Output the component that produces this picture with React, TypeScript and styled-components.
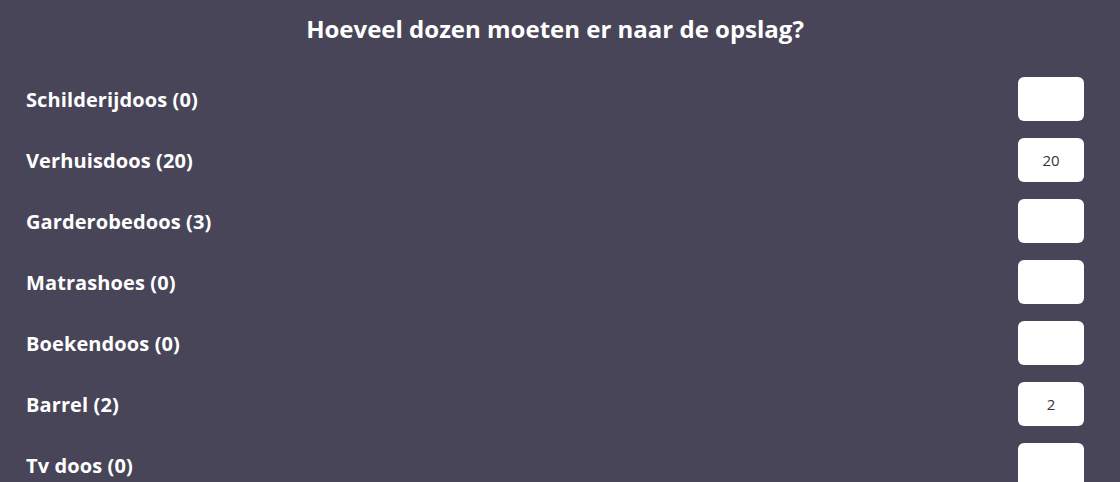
import React from "react";
import styled, { createGlobalStyle } from "styled-components";

const GlobalStyle = createGlobalStyle`
	html, body {
		margin: 0;
		padding: 0;
		background: #484558;
	}
	body {
		font-family: "Open Sans", Lato, sans-serif;
		color: #fff;
	}
`;

type BoxItem = {
	name: string;
	count: number;
	value: string;
};

const boxes: BoxItem[] = [
	{ name: "Schilderijdoos", count: 0, value: "" },
	{ name: "Verhuisdoos", count: 20, value: "20" },
	{ name: "Garderobedoos", count: 3, value: "" },
	{ name: "Matrashoes", count: 0, value: "" },
	{ name: "Boekendoos", count: 0, value: "" },
	{ name: "Barrel", count: 2, value: "2" },
	{ name: "Tv doos", count: 0, value: "" },
];

export default function App() {
	return (
		<>
			<GlobalStyle />
			<Page>
				<Title>Hoeveel dozen moeten er naar de opslag?</Title>
				<List>
					{boxes.map((item) => (
						<Row key={item.name}>
							<Label>
								{item.name} ({item.count})
							</Label>
							<AmountInput type='text' defaultValue={item.value} />
						</Row>
					))}
				</List>
			</Page>
		</>
	);
}

const Page = styled.div`
	height: 482px;
	overflow: hidden;
	padding: 0 36px 0 26px;
	box-sizing: border-box;
`;

const Title = styled.h1`
	margin: 0;
	padding-top: 13px;
	height: 32px;
	line-height: 32px;
	text-align: center;
	font-size: 24px;
	font-weight: 700;
	color: #fff;
`;

const List = styled.div`
	display: flex;
	flex-direction: column;
	gap: 17px;
	margin-top: 32px;
`;

const Row = styled.div`
	display: flex;
	align-items: center;
	justify-content: space-between;
	height: 44px;
`;

const Label = styled.span`
	font-size: 20px;
	font-weight: 700;
	letter-spacing: 0.1px;
	color: #fff;
`;

const AmountInput = styled.input`
	width: 66px;
	height: 44px;
	box-sizing: border-box;
	border: none;
	border-radius: 6px;
	background: #fff;
	text-align: center;
	font-family: "Open Sans", sans-serif;
	font-size: 15px;
	color: #333;
	outline: none;
	padding: 0;
`;
